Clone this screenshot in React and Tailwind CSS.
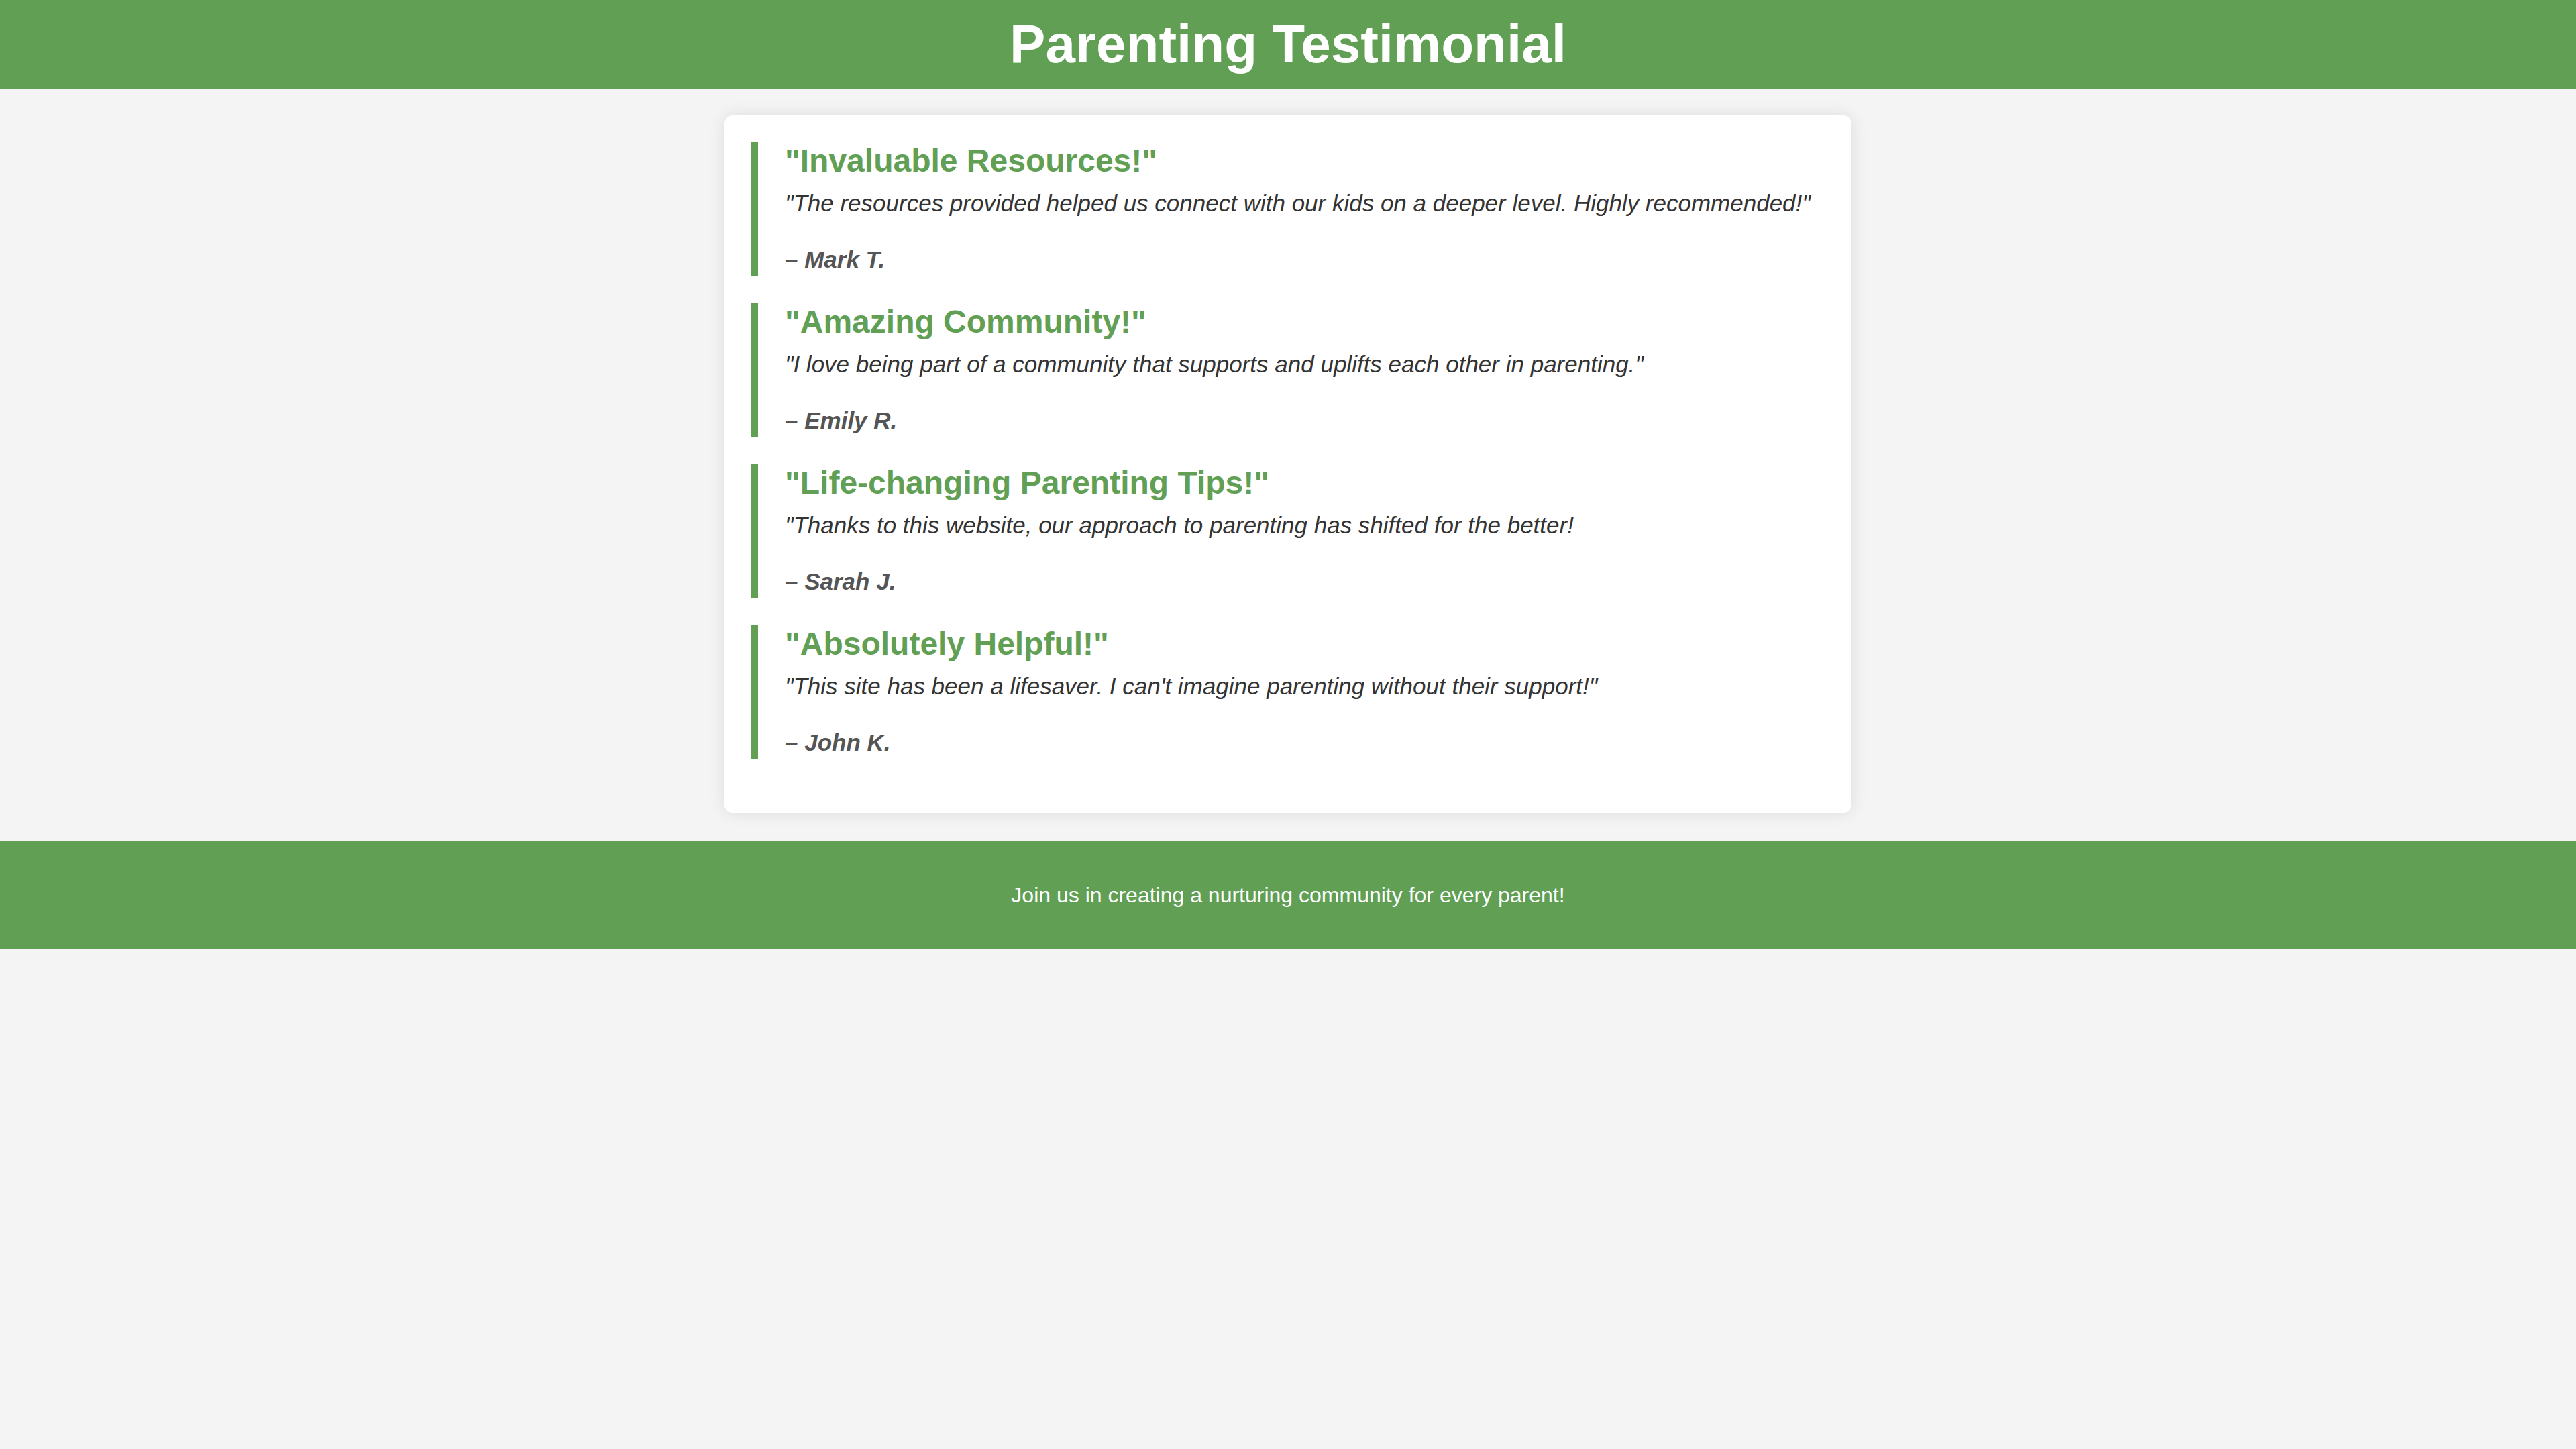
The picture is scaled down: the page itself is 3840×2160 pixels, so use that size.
import React from 'react';

const testimonials = [
  {
    title: '"Invaluable Resources!"',
    quote: '"The resources provided helped us connect with our kids on a deeper level. Highly recommended!"',
    author: '– Mark T.',
  },
  {
    title: '"Amazing Community!"',
    quote: '"I love being part of a community that supports and uplifts each other in parenting."',
    author: '– Emily R.',
  },
  {
    title: '"Life-changing Parenting Tips!"',
    quote: '"Thanks to this website, our approach to parenting has shifted for the better!',
    author: '– Sarah J.',
  },
  {
    title: '"Absolutely Helpful!"',
    quote: '"This site has been a lifesaver. I can\'t imagine parenting without their support!"',
    author: '– John K.',
  },
];

const Testimonial = ({ title, quote, author }) => (
  <blockquote className="mb-[40px] border-l-[10px] border-[#619f55] pl-[40px] pb-[5px]">
    <h3 className="m-0 text-[48px] leading-[55px] font-bold text-[#619f55]">{title}</h3>
    <p className="mt-[16px] text-[35px] leading-[40px] italic text-[#333333]">{quote}</p>
    <p className="mt-[43px] text-[35px] leading-[41px] italic font-bold text-[#555555]">{author}</p>
  </blockquote>
);

export default function App() {
  return (
    <div className="min-h-screen bg-[#f4f4f4] font-['Liberation_Sans',Arial,sans-serif]">
      <header className="bg-[#619f55] py-[20px] text-center">
        <h1 className="m-0 text-[80px] leading-[92px] font-bold text-white">Parenting Testimonial</h1>
      </header>

      <main className="flex justify-center pt-[40px] pb-[42px]">
        <div className="w-[1680px] rounded-[12px] bg-white px-[40px] pt-[40px] pb-[40px] shadow-[0_0_25px_rgba(0,0,0,0.1)]">
          {testimonials.map((t) => (
            <Testimonial key={t.author} {...t} />
          ))}
        </div>
      </main>

      <footer className="flex h-[161px] items-center justify-center bg-[#619f55]">
        <p className="text-[32px] leading-[37px] text-white">Join us in creating a nurturing community for every parent!</p>
      </footer>
    </div>
  );
}
